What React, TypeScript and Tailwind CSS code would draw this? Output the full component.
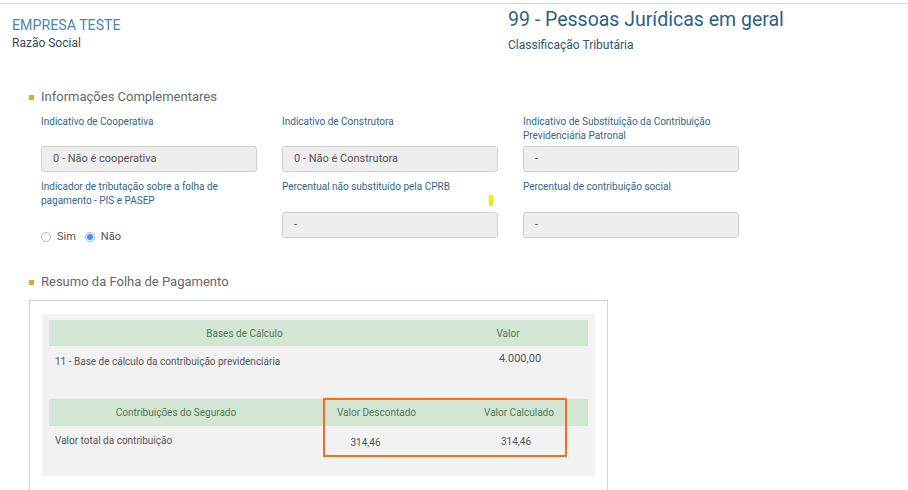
import React from "react";

const Field: React.FC<{ label: React.ReactNode; value?: string; labelH: string }> = ({ label, value, labelH }) => {
  return (
    <div className="flex flex-col">
      <div className={`${labelH} text-[10px] leading-[14px] text-[#2f6690]`}>{label}</div>
      {value !== undefined && (
        <div className="h-[26px] rounded-[3px] border border-[#d0d0d0] bg-[#eeeeee] pl-[11px] text-[11px] leading-[24px] text-[#555]">
          {value}
        </div>
      )}
    </div>
  );
};

const SectionTitle: React.FC<{ title: string }> = ({ title }) => (
  <div className="flex items-center gap-[7px] pl-[29px]">
    <span className="h-[5px] w-[5px] bg-[#f3a21c]"></span>
    <span className="text-[13px] leading-[18px] text-[#666]">{title}</span>
  </div>
);

const App: React.FC = () => {
  return (
    <div className="relative h-[490px] w-[908px] overflow-hidden bg-white font-['Roboto',sans-serif]">
      <div className="mt-[3px] border-t border-[#cfd8e2]"></div>

      {/* header */}
      <div className="flex">
        <div className="w-[508px] pl-[12px] pt-[12px]">
          <div className="text-[14.2px] leading-[19px] text-[#4a86b3]">EMPRESA TESTE</div>
          <div className="text-[12px] leading-[16px] text-[#34495e]">Razão Social</div>
        </div>
        <div className="pt-[4px]">
          <div className="text-[19.5px] leading-[24px] text-[#2b5f8e]">99 - Pessoas Jurídicas em geral</div>
          <div className="mt-[5px] text-[12px] leading-[16px] text-[#2f5573]">Classificação Tributária</div>
        </div>
      </div>

      {/* informações complementares */}
      <div className="mt-[35px]">
        <SectionTitle title="Informações Complementares" />
        <div className="mt-[9px] grid grid-cols-[216px_216px_216px] gap-x-[25px] gap-y-[8px] pl-[41px]">
          <Field labelH="h-[31px]" label="Indicativo de Cooperativa" value="0 - Não é cooperativa" />
          <Field labelH="h-[31px]" label="Indicativo de Construtora" value="0 - Não é Construtora" />
          <Field
            labelH="h-[31px]"
            label={<>Indicativo de Substituição da Contribuição<br />Previdenciária Patronal</>}
            value="-"
          />
          <div className="flex flex-col">
            <div className="h-[50px] text-[10px] leading-[14px] text-[#2f6690]">
              Indicador de tributação sobre a folha de<br />pagamento - PIS e PASEP
            </div>
            <div className="flex h-[14px] items-center text-[11px] text-[#555]">
              <span className="h-[10px] w-[10px] rounded-full border border-[#b8b8b8] bg-white"></span>
              <span className="ml-[6px]">Sim</span>
              <span className="ml-[9px] flex h-[10px] w-[10px] items-center justify-center rounded-full border border-[#9fc3ec] bg-[#e6f0fb]">
                <span className="h-[6px] w-[6px] rounded-full bg-[#4a90e2]"></span>
              </span>
              <span className="ml-[6px]">Não</span>
            </div>
          </div>
          <Field labelH="h-[32px]" label="Percentual não substituído pela CPRB" value="-" />
          <Field labelH="h-[32px]" label="Percentual de contribuição social" value="-" />
        </div>
      </div>

      {/* yellow marker */}
      <div className="absolute left-[489px] top-[195px] h-[11px] w-[4px] bg-[#ffe600]"></div>

      {/* resumo */}
      <div className="mt-[29px]">
        <SectionTitle title="Resumo da Folha de Pagamento" />
        <div className="ml-[29px] mt-[9px] h-[200px] w-[579px] border border-[#c9d4de] px-[12px] pt-[13px]">
          <div className="relative h-[162px] bg-[#f2f2f2] px-[7px] pt-[6px] text-[10px] text-[#555]">
            <div className="grid h-[26px] grid-cols-[391px_1fr] items-center bg-[#d3e6d3] text-[#4d7a58]">
              <div className="text-center">Bases de Cálculo</div>
              <div className="pr-[12px] text-center">Valor</div>
            </div>
            <div className="grid h-[53px] grid-cols-[391px_1fr]">
              <div className="pl-[6px] pt-[8px]">11 - Base de cálculo da contribuição previdenciária</div>
              <div className="pl-[12px] pt-[5px] text-center text-[11px]">4.000,00</div>
            </div>
            <div className="grid h-[27px] grid-cols-[254px_147px_1fr] items-center bg-[#d3e6d3] text-[#4d7a58]">
              <div className="text-center">Contribuições do Segurado</div>
              <div className="text-center">Valor Descontado</div>
              <div className="text-center">Valor Calculado</div>
            </div>
            <div className="grid grid-cols-[254px_147px_1fr]">
              <div className="pl-[6px] pt-[7px]">Valor total da contribuição</div>
              <div className="pr-[22px] pt-[9px] text-center">314,46</div>
              <div className="pr-[6px] pt-[8px] text-center">314,46</div>
            </div>
            <div className="absolute left-[281px] top-[84px] h-[59px] w-[244px] border-2 border-[#ff6a1a]"></div>
          </div>
        </div>
      </div>
    </div>
  );
};

export default App;
